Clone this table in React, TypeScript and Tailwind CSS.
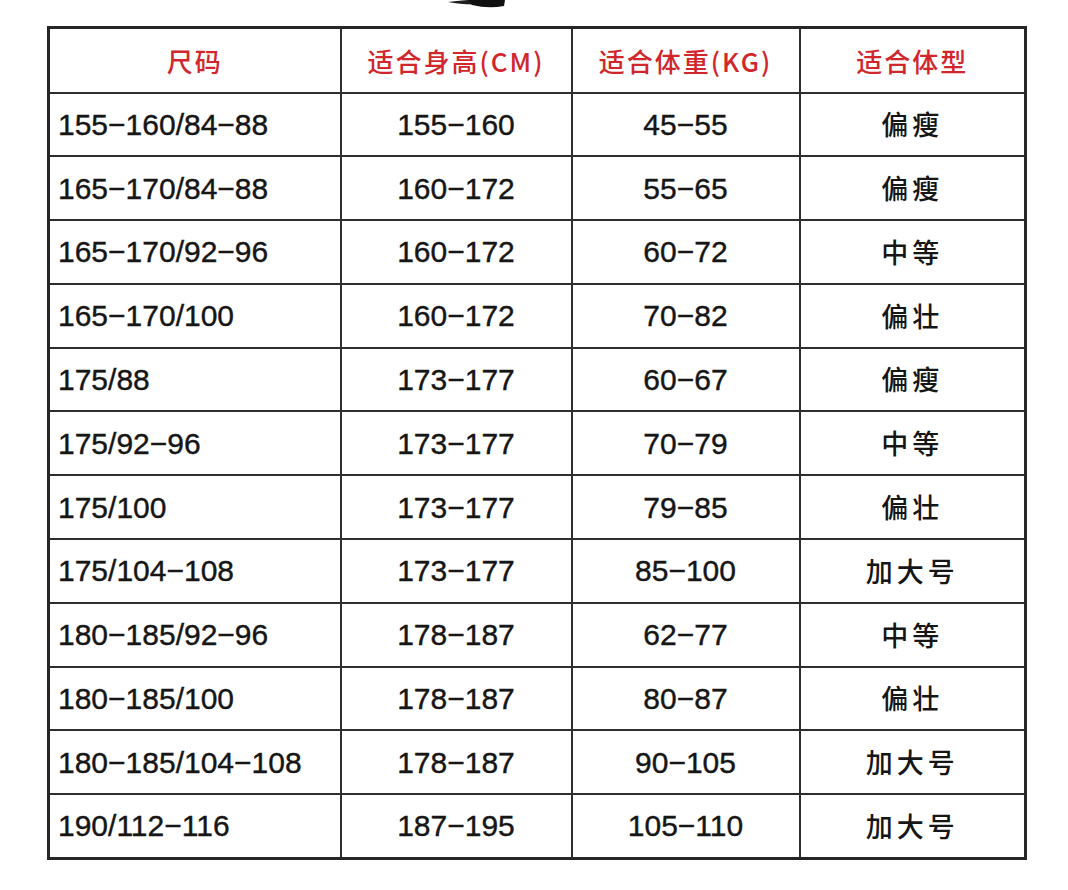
import React from "react";

const rows: [string, string, string, string][] = [
  ["155−160/84−88", "155−160", "45−55", "偏瘦"],
  ["165−170/84−88", "160−172", "55−65", "偏瘦"],
  ["165−170/92−96", "160−172", "60−72", "中等"],
  ["165−170/100", "160−172", "70−82", "偏壮"],
  ["175/88", "173−177", "60−67", "偏瘦"],
  ["175/92−96", "173−177", "70−79", "中等"],
  ["175/100", "173−177", "79−85", "偏壮"],
  ["175/104−108", "173−177", "85−100", "加大号"],
  ["180−185/92−96", "178−187", "62−77", "中等"],
  ["180−185/100", "178−187", "80−87", "偏壮"],
  ["180−185/104−108", "178−187", "90−105", "加大号"],
  ["190/112−116", "187−195", "105−110", "加大号"],
];

const num =
  "font-['Liberation_Sans','Noto_Sans_CJK_SC',sans-serif] text-[30px] text-[#161616] [-webkit-text-stroke:0.4px_#161616]";
const cjk =
  "font-['Noto_Sans_CJK_SC',sans-serif] text-[27px] tracking-[4px] text-[#161616] font-medium";
const head =
  "font-['Noto_Sans_CJK_SC',sans-serif] text-[26px] tracking-[2px] text-[#d0262c] font-medium";
const cell = "border-2 border-[#2e2e2e] p-0";

export default function App() {
  return (
    <div className="w-[1068px] h-[890px] bg-white overflow-hidden">
      <div className="h-[26px] pl-[448px]">
        <svg width="60" height="10" viewBox="0 0 60 10">
          <path d="M0 2 C 15 5, 35 6, 56 1 L 56 0 L 20 0 Q 8 1 0 2 Z" fill="#1e1e1e" />
          <path d="M20 0 L 57 0 L 56 6 Q 40 9 24 5 Z" fill="#111" />
        </svg>
      </div>
      <table className="ml-[47px] border-collapse border-[3px] border-[#262626] table-fixed w-[979px]">
        <colgroup>
          <col className="w-[292px]" />
          <col className="w-[231px]" />
          <col className="w-[228px]" />
          <col className="w-[226px]" />
        </colgroup>
        <thead>
          <tr className="h-[65px]">
            <th className={`${cell} ${head} text-center`}>尺码</th>
            <th className={`${cell} ${head} text-center`}>适合身高(CM)</th>
            <th className={`${cell} ${head} text-center`}>适合体重(KG)</th>
            <th className={`${cell} ${head} text-center`}>适合体型</th>
          </tr>
        </thead>
        <tbody>
          {rows.map((r, i) => (
            <tr key={i} className="h-[63.8px]">
              <td className={`${cell} ${num} pl-[8px] text-left`}>{r[0]}</td>
              <td className={`${cell} ${num} text-center`}>{r[1]}</td>
              <td className={`${cell} ${num} text-center`}>{r[2]}</td>
              <td className={`${cell} ${cjk} text-center`}>{r[3]}</td>
            </tr>
          ))}
        </tbody>
      </table>
    </div>
  );
}
